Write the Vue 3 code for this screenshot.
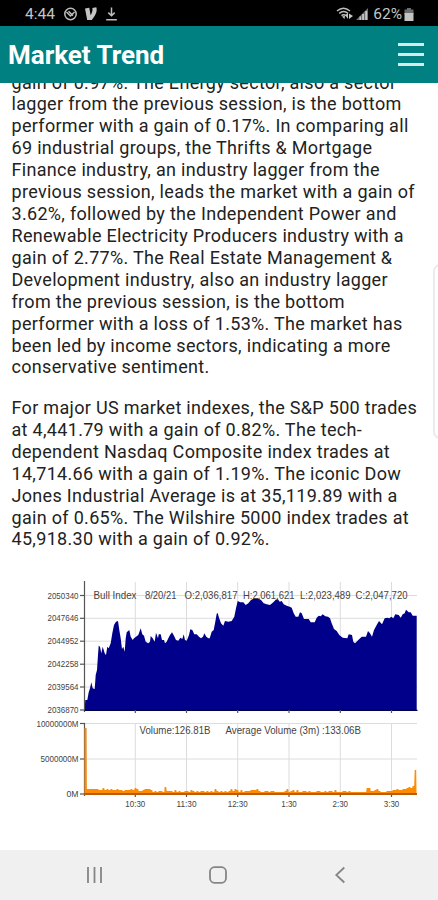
<template>
  <div class="screen">
    <div class="status-bar">
      <div class="status-left">
        <span class="status-time">4:44</span>
        <svg class="icon-circle" width="15" height="14" viewBox="0 0 15 14">
          <circle cx="7.5" cy="7" r="5.7" />
          <path d="M3.5 5 L7.5 9 L11.5 5 M5.5 4.2 L10 8.6" />
        </svg>
        <svg width="15" height="14" viewBox="0 0 15 14">
          <path class="icon-fill" d="M1 1.6 L5.3 0.7 L6.6 8.2 C8 5.8 9 3.4 8.3 1 L12.3 0.3 C13.8 4.8 10.8 9.2 7.8 13 L3.2 13 Z" />
        </svg>
        <svg class="icon-download" width="13" height="14" viewBox="0 0 13 14">
          <path d="M6.5 0.5 V8 M3.3 5.6 L6.5 8.8 L9.7 5.6 M1.2 12.7 H11.8" />
        </svg>
      </div>
      <div class="status-right">
        <svg class="icon-wifi" width="18" height="14" viewBox="0 0 18 14">
          <path d="M1 4 C5 0.6 10 0.6 14 4 M3.2 6.3 C6 4 9.3 4 12 6.3 M5.5 8.6 C7 7.4 8.5 7.4 10 8.6" />
          <path class="icon-fill" d="M6 9.5 L9 8.7 L8.5 12 Z M9.2 8.3 L12 5.8 V12 Z M13 6.5 L17 9 L13 12 Z" />
        </svg>
        <svg width="12" height="12" viewBox="0 0 12 12">
          <path class="icon-dim" d="M0 12 L12 0 V12 Z" />
          <path class="icon-fill" d="M3.5 8.5 H5 V12 H3.5 Z M6.2 6 H8 V12 H6.2 Z M9.2 3 H11.2 V12 H9.2 Z" />
        </svg>
        <span class="status-battery">62%</span>
        <svg width="10" height="13" viewBox="0 0 10 13">
          <path class="icon-dim" d="M3 0 H7 V1.5 H9.5 V6 H0.5 V1.5 H3 Z" />
          <path class="icon-fill" d="M0.5 5 H9.5 V13 H0.5 Z" />
        </svg>
      </div>
    </div>

    <header class="app-header">
      <h1 class="title">Market Trend</h1>
      <button class="menu-btn" aria-label="Menu">
        <span></span>
        <span></span>
        <span></span>
      </button>
    </header>

    <main class="content">
      <p v-for="(lines, i) in paragraphs" :key="i" class="report">
        <span v-for="line in lines" :key="line" class="report-line">{{ line }}</span>
      </p>

      <svg class="chart" width="438" height="250" viewBox="0 0 438 250">
        <!-- grid -->
        <g class="grid">
          <line v-for="t in priceTicks.slice(0, 5)" :key="t.label" x1="85" x2="417" :y1="t.y" :y2="t.y" />
          <line v-for="t in volumeTicks.slice(0, 2)" :key="t.label" x1="85" x2="417" :y1="t.y" :y2="t.y" />
          <line v-for="t in timeTicks" :key="'p' + t.label" :x1="t.x" :x2="t.x" y1="7" y2="135" />
          <line v-for="t in timeTicks" :key="'v' + t.label" :x1="t.x" :x2="t.x" y1="148" y2="219" />
        </g>

        <!-- price -->
        <polygon class="price-area" :points="pricePoints" />
        <path class="axis" d="M84.5 6 V137 M84.5 148 V221" />
        <path class="price-base" d="M84 135.3 H417.5" />
        <g class="axis">
          <line v-for="t in priceTicks" :key="t.label" x1="80" x2="85" :y1="t.y" :y2="t.y" />
          <line v-for="t in volumeTicks" :key="t.label" x1="80" x2="85" :y1="t.y" :y2="t.y" />
          <line v-for="t in timeTicks" :key="'p' + t.label" :x1="t.x" :x2="t.x" y1="135" y2="138" />
          <line v-for="t in timeTicks" :key="'v' + t.label" :x1="t.x" :x2="t.x" y1="219" y2="222" />
        </g>

        <!-- volume -->
        <path class="volume-open" d="M85.5 153 V219" />
        <polygon class="volume-area" :points="volumePoints" />
        <path class="volume-base" d="M84 219 H417" />

        <g class="tick-label">
          <text v-for="t in priceTicks" :key="t.label" x="78.5" :y="t.y + 3" text-anchor="end" textLength="31" lengthAdjust="spacingAndGlyphs">{{ t.label }}</text>
          <text v-for="t in volumeTicks" :key="t.label" x="78.5" :y="t.y + 3" text-anchor="end" :textLength="t.width" lengthAdjust="spacingAndGlyphs">{{ t.label }}</text>
          <text v-for="t in timeTicks" :key="t.label" :x="t.x" y="232" text-anchor="middle" :textLength="t.width" lengthAdjust="spacingAndGlyphs">{{ t.label }}</text>
        </g>
        <g class="legend">
          <text
            v-for="t in legend"
            :key="t.text"
            :x="t.x"
            :y="t.y"
            :textLength="t.width"
            lengthAdjust="spacingAndGlyphs"
          >{{ t.text }}</text>
        </g>
      </svg>

      <div class="edge-panel"></div>
    </main>

    <nav class="nav-bar">
      <svg class="nav-icon" width="18" height="18" viewBox="0 0 18 18">
        <path d="M2 1 V17 M8.5 1 V17 M15 1 V17" />
      </svg>
      <svg class="nav-icon" width="18" height="18" viewBox="0 0 18 18">
        <rect x="1" y="1.2" width="16" height="15.6" rx="4.5" />
      </svg>
      <svg class="nav-icon" width="18" height="18" viewBox="0 0 18 18">
        <path d="M12.3 1.5 L4.3 9 L12.3 16.5" />
      </svg>
    </nav>
  </div>
</template>

<script setup>
import { computed } from 'vue'

const paragraphs = [
  [
    'gain of 0.97%. The Energy sector, also a sector',
    'lagger from the previous session, is the bottom',
    'performer with a gain of 0.17%. In comparing all',
    '69 industrial groups, the Thrifts & Mortgage',
    'Finance industry, an industry lagger from the',
    'previous session, leads the market with a gain of',
    '3.62%, followed by the Independent Power and',
    'Renewable Electricity Producers industry with a',
    'gain of 2.77%. The Real Estate Management &',
    'Development industry, also an industry lagger',
    'from the previous session, is the bottom',
    'performer with a loss of 1.53%. The market has',
    'been led by income sectors, indicating a more',
    'conservative sentiment.'
  ],
  [
    'For major US market indexes, the S&P 500 trades',
    'at 4,441.79 with a gain of 0.82%. The tech-',
    'dependent Nasdaq Composite index trades at',
    '14,714.66 with a gain of 1.19%. The iconic Dow',
    'Jones Industrial Average is at 35,119.89 with a',
    'gain of 0.65%. The Wilshire 5000 index trades at',
    '45,918.30 with a gain of 0.92%.'
  ]
]

const priceTicks = [
  { label: '2050340', y: 20.5 },
  { label: '2047646', y: 43.3 },
  { label: '2044952', y: 66.2 },
  { label: '2042258', y: 89.2 },
  { label: '2039564', y: 112 },
  { label: '2036870', y: 135 }
]

const volumeTicks = [
  { label: '10000000M', y: 148.5, width: 42 },
  { label: '5000000M', y: 184, width: 38 },
  { label: '0M', y: 219, width: 12 }
]

const timeTicks = [
  { label: '10:30', x: 135.3, width: 20 },
  { label: '11:30', x: 186.5, width: 20 },
  { label: '12:30', x: 237.7, width: 20 },
  { label: '1:30', x: 289, width: 15.5 },
  { label: '2:30', x: 340.3, width: 15.5 },
  { label: '3:30', x: 391.5, width: 15.5 }
]

const legend = [
  { text: 'Bull Index', x: 93.5, y: 24.3, width: 43 },
  { text: '8/20/21', x: 145, y: 24.3, width: 31.5 },
  { text: 'O:2,036,817', x: 184.5, y: 24.3, width: 53 },
  { text: 'H:2,061,621', x: 243, y: 24.3, width: 51.5 },
  { text: 'L:2,023,489', x: 300, y: 24.3, width: 50.5 },
  { text: 'C:2,047,720', x: 355.5, y: 24.3, width: 52 },
  { text: 'Volume:126.81B', x: 139.5, y: 159.3, width: 71 },
  { text: 'Average Volume (3m) :133.06B', x: 225.5, y: 159.3, width: 135.5 }
]

// price series, three units per pixel: morning, midday, afternoon
const morning = [
  [164, 400], [166, 375], [172, 375], [176, 352], [180, 340], [184, 322], [188, 340], [194, 342],
  [197, 300], [201, 285], [204, 240], [206, 212], [210, 215], [214, 235], [218, 215], [224, 235],
  [228, 240], [232, 215], [236, 220], [242, 205], [247, 175], [252, 150], [258, 140], [264, 138],
  [268, 165], [272, 190], [276, 222], [280, 215], [284, 230], [287, 190], [290, 172], [298, 165],
  [302, 185], [308, 195], [312, 190], [318, 185], [325, 180], [332, 160], [337, 178], [342, 182],
  [347, 200], [355, 205], [360, 200], [362, 183], [368, 190], [374, 200], [378, 173], [384, 190],
  [386, 178], [392, 178], [396, 195], [402, 195]
]
const midday = [
  [0, 205], [5, 200], [10, 190], [15, 180], [21, 172], [27, 182], [33, 195], [40, 197],
  [46, 188], [52, 192], [56, 178], [60, 195], [65, 197], [72, 180], [76, 163], [82, 165],
  [88, 178], [95, 178], [102, 185], [108, 190], [114, 185], [118, 175], [124, 185], [130, 190],
  [134, 190], [140, 170], [146, 165], [151, 140], [155, 116], [158, 114], [162, 128], [168, 145],
  [175, 152], [180, 138], [190, 140], [200, 138], [208, 125], [213, 100], [218, 78], [226, 82],
  [235, 82], [242, 90], [250, 85], [258, 75], [268, 70], [278, 70], [288, 75], [296, 85],
  [305, 88], [315, 90], [325, 82], [332, 74], [338, 72], [344, 80], [350, 78], [356, 88],
  [365, 92], [374, 95], [380, 98], [386, 115], [392, 125], [400, 125]
]
const afternoon = [
  [0, 112], [5, 115], [12, 132], [20, 132], [26, 132], [32, 142], [44, 142], [50, 128],
  [56, 122], [62, 124], [68, 118], [76, 124], [84, 125], [90, 130], [95, 145], [102, 162],
  [110, 168], [118, 180], [128, 188], [142, 190], [146, 178], [156, 180], [160, 200], [165, 205],
  [175, 195], [185, 185], [198, 185], [204, 168], [210, 175], [216, 185], [222, 165], [230, 150],
  [237, 138], [246, 148], [254, 130], [262, 128], [268, 130], [274, 125], [280, 130], [286, 118],
  [296, 120], [302, 128], [308, 118], [314, 115], [318, 104], [326, 112], [332, 112], [338, 122],
  [350, 122]
]

// bar heights, one every two pixels
const volumes = [
  66, 5, 5, 5, 5, 5, 5, 4, 4, 6, 4, 5, 4, 5, 4, 4, 5, 4, 4, 3,
  4, 4, 4, 5, 4, 6, 5, 3, 3, 4, 5, 5, 5, 4, 2, 3, 2, 3, 3, 2,
  7, 3, 3, 3, 2, 4, 2, 3, 2, 2, 3, 3, 2, 4, 3, 2, 3, 2, 3, 3,
  2, 3, 2, 3, 2, 5, 3, 2, 3, 2, 3, 2, 3, 5, 3, 5, 4, 2, 4, 2,
  3, 3, 3, 4, 4, 4, 5, 3, 2, 2, 3, 3, 2, 3, 3, 2, 2, 2, 2, 2,
  3, 5, 2, 3, 4, 2, 4, 2, 2, 3, 3, 2, 3, 2, 2, 2, 3, 3, 2, 2,
  3, 2, 3, 3, 2, 4, 2, 2, 2, 3, 3, 2, 3, 2, 2, 2, 2, 2, 2, 2,
  2, 6, 6, 3, 3, 4, 5, 3, 2, 2, 2, 3, 3, 3, 4, 4, 5, 4, 4, 5,
  5, 6, 7, 6, 8, 24
]

const pricePoints = computed(() => {
  const points = [
    ...morning.map(([x, y]) => [x + 90, y]),
    ...midday.map(([x, y]) => [x + 495, y]),
    ...afternoon.map(([x, y]) => [x + 900, y])
  ].map(([x, y]) => `${(x / 3).toFixed(1)},${(y / 3).toFixed(1)}`)
  return ['84.5,135', ...points, '416.7,135'].join(' ')
})

const volumePoints = computed(() => {
  const points = volumes.map((v, i) => {
    const x = 84.7 + i * 2
    return `${x},${219 - v} ${x + 1.5},${219 - v}`
  })
  return ['84.7,219', ...points, '416.5,219'].join(' ')
})
</script>

<style>
body {
  margin: 0;
  background: #fff;
}
</style>

<style scoped>
.screen {
  display: flex;
  flex-direction: column;
  width: 438px;
  height: 900px;
  overflow: hidden;
  background: #fff;
  font-family: Roboto, "Liberation Sans", sans-serif;
}

/* status bar */
.status-bar {
  display: flex;
  justify-content: space-between;
  align-items: center;
  flex: none;
  box-sizing: border-box;
  height: 26px;
  padding: 2px 24px 0 25px;
  background: #000;
  color: #c4c4c4;
  font-size: 15.5px;
}

.status-left,
.status-right {
  display: flex;
  align-items: center;
}

.status-left {
  gap: 6px;
}

.status-time {
  width: 32px;
}

.status-right {
  gap: 2px;
}

.status-battery {
  margin-left: 3px;
}

.icon-circle,
.icon-download,
.icon-wifi {
  fill: none;
  stroke: #bdbdbd;
  stroke-width: 1.5;
}

.icon-fill {
  fill: #c4c4c4;
  stroke: none;
}

.icon-dim {
  fill: #6c6c6c;
}

/* header */
.app-header {
  display: flex;
  justify-content: space-between;
  align-items: center;
  flex: none;
  height: 57px;
  padding: 0 14px 0 8px;
  background: #008080;
}

.title {
  margin: 2px 0 0;
  color: #fff;
  font-size: 26px;
  font-weight: 700;
  line-height: 55px;
}

.menu-btn {
  display: flex;
  flex-direction: column;
  gap: 7px;
  width: 26px;
  padding: 0;
  margin-bottom: 1px;
  border: none;
  background: transparent;
}

.menu-btn span {
  height: 3px;
  background: #d5ebeb;
}

/* report */
.content {
  position: relative;
  flex: 1;
  min-height: 0;
  overflow: hidden;
}

.report {
  margin: -11.5px 0 30.5px;
  padding-left: 11.5px;
  color: #222;
  font-size: 18px;
  line-height: 21.92px;
  letter-spacing: 0.31px;
}

.report + .report {
  margin: -12px 0 24.5px;
}

.report-line {
  display: block;
  white-space: nowrap;
}

.edge-panel {
  position: absolute;
  top: 181px;
  right: -10px;
  width: 11px;
  height: 171px;
  border: 2px solid #ebebeb;
  border-radius: 7px;
  background: #fff;
}

/* chart */
.chart {
  display: block;
}

.grid {
  stroke: #dcdcdc;
  stroke-width: 1;
}

.axis {
  fill: none;
  stroke: #555;
  stroke-width: 1.2;
}

.price-area {
  fill: #00008b;
}

.price-base {
  stroke: #000050;
  stroke-width: 1.3;
}

.volume-open {
  stroke: #c98a45;
  stroke-width: 2;
}

.volume-area {
  fill: #ff8c00;
}

.volume-base {
  stroke: #b85c0c;
  stroke-width: 1.8;
}

.tick-label {
  fill: #444;
  font-family: "Liberation Sans", Arial, sans-serif;
  font-size: 8.5px;
}

.legend {
  fill: #444;
  font-family: "Liberation Sans", Arial, sans-serif;
  font-size: 10.5px;
}

/* navigation bar */
.nav-bar {
  display: flex;
  justify-content: space-between;
  align-items: center;
  flex: none;
  box-sizing: border-box;
  height: 50px;
  padding: 0 88px 0 86px;
  background: #f0f0f0;
}

.nav-icon {
  fill: none;
  stroke: #858585;
  stroke-width: 1.8;
}
</style>
